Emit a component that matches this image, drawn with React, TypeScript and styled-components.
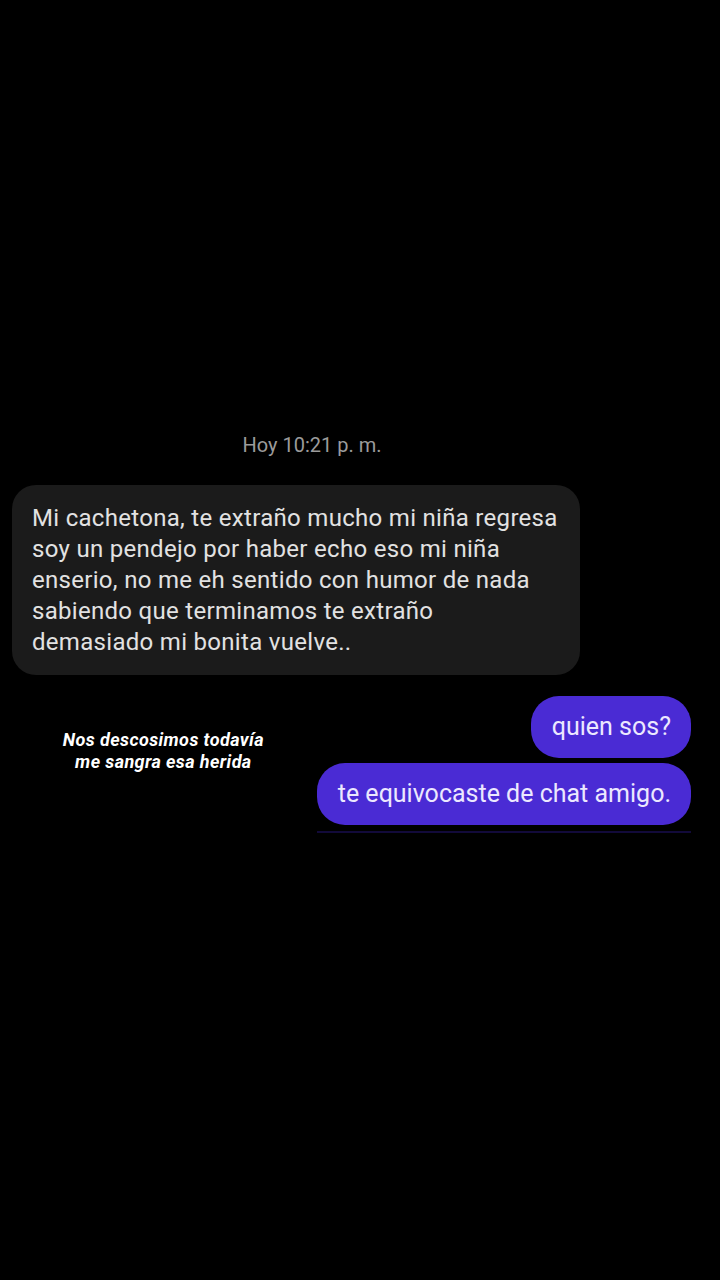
import React from 'react';
import styled, { createGlobalStyle } from 'styled-components';

const GlobalStyle = createGlobalStyle`
  html, body {
    margin: 0;
    padding: 0;
    background: #000;
  }
`;

const Screen = styled.div`
  width: 720px;
  height: 1280px;
  background: #000;
  display: flex;
  flex-direction: column;
  padding-top: 430px;
  box-sizing: border-box;
  font-family: Roboto, 'Liberation Sans', sans-serif;
`;

const Stamp = styled.div`
  align-self: center;
  margin-left: -96px;
  color: #9b9b9b;
  font-size: 20px;
  line-height: 30px;
`;

const Received = styled.div`
  margin: 25px 0 0 12px;
  width: 568px;
  box-sizing: border-box;
  background: #1b1b1b;
  border-radius: 24px;
  padding: 18px 20px 17px 20px;
  color: #e2e2e2;
  font-size: 24px;
  line-height: 31px;
  letter-spacing: 0.3px;
  white-space: nowrap;
`;

const Row = styled.div`
  display: flex;
  align-items: flex-start;
  margin-top: 21px;
  padding-right: 29px;
`;

const Caption = styled.div`
  flex: 1;
  padding-left: 10px;
  margin-top: 33px;
  text-align: center;
  color: #fff;
  font-size: 18px;
  font-weight: 700;
  font-style: italic;
  line-height: 22px;
  letter-spacing: 0.4px;
`;

const Sent = styled.div`
  flex-shrink: 0;
  display: flex;
  flex-direction: column;
  align-items: flex-end;
  gap: 5px;
  padding-bottom: 6px;
  border-bottom: 2px solid #120a3a;
`;

const Bubble = styled.div`
  background: #4a2bd4;
  color: #ece8ff;
  font-size: 25px;
  line-height: 31px;
  padding: 15px 20px 16px 21px;
  border-radius: 28px;
  white-space: nowrap;
`;

export default function App() {
  return (
    <>
      <GlobalStyle />
      <Screen>
        <Stamp>Hoy 10:21 p. m.</Stamp>
        <Received>
          Mi cachetona, te extraño mucho mi niña regresa
          <br />
          soy un pendejo por haber echo eso mi niña
          <br />
          enserio, no me eh sentido con humor de nada
          <br />
          sabiendo que terminamos te extraño
          <br />
          demasiado mi bonita vuelve..
        </Received>
        <Row>
          <Caption>
            Nos descosimos todavía
            <br />
            me sangra esa herida
          </Caption>
          <Sent>
            <Bubble>quien sos?</Bubble>
            <Bubble>te equivocaste de chat amigo.</Bubble>
          </Sent>
        </Row>
      </Screen>
    </>
  );
}
